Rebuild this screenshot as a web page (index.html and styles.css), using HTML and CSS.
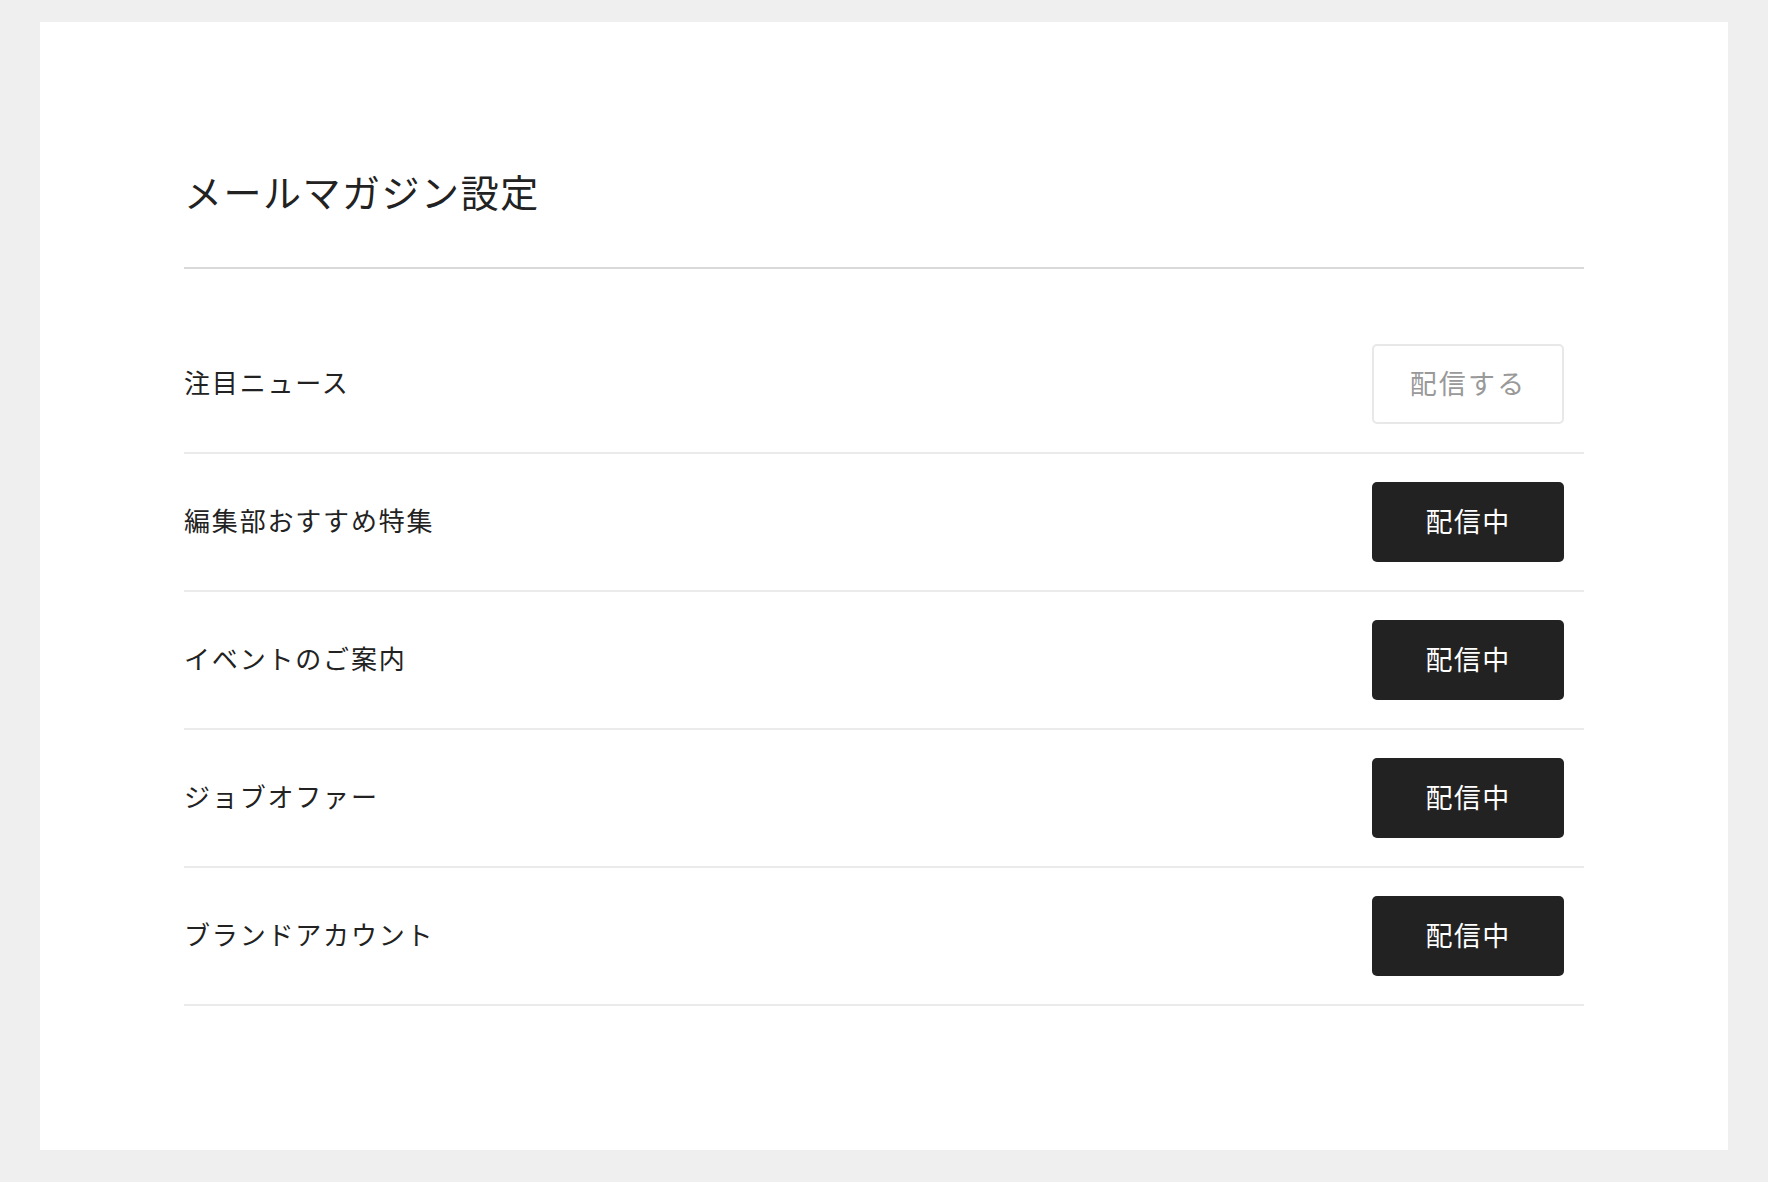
FILE: index.html
```html
<!DOCTYPE html>
<html lang="ja">
<head>
    <meta charset="utf-8">
    <title>メールマガジン設定</title>
    <link rel="stylesheet" href="styles.css">
</head>
<body>
    <div class="page">
        <div class="card">
            <div class="container">
                <h1 class="title">メールマガジン設定</h1>

                <ul class="mail-list">
                    <li class="mail-row">
                        <span class="mail-label">注目ニュース</span>
                        <button class="button button-off">配信する</button>
                    </li>
                    <li class="mail-row">
                        <span class="mail-label">編集部おすすめ特集</span>
                        <button class="button button-on">配信中</button>
                    </li>
                    <li class="mail-row">
                        <span class="mail-label">イベントのご案内</span>
                        <button class="button button-on">配信中</button>
                    </li>
                    <li class="mail-row">
                        <span class="mail-label">ジョブオファー</span>
                        <button class="button button-on">配信中</button>
                    </li>
                    <li class="mail-row">
                        <span class="mail-label">ブランドアカウント</span>
                        <button class="button button-on">配信中</button>
                    </li>
                </ul>
            </div>
        </div>
    </div>
</body>
</html>
```

FILE: styles.css
```css
body {
    margin: 0;
    padding: 0;
    background: #efefef;
    color: #222;
    font-family: "Noto Sans CJK JP", sans-serif;
}

.page {
    padding: 22px 40px 32px;
}

.card {
    background: #fff;
    padding: 142px 0 144px;
}

.container {
    max-width: 1400px;
    margin: 0 auto;
}

.title {
    margin: 0;
    font-size: 38px;
    font-weight: normal;
    line-height: 54px;
    letter-spacing: 0.04em;
    padding-bottom: 49px;
    border-bottom: 2px solid #d9d9d9;
}

.mail-list {
    list-style: none;
    margin: 47px 0 0;
    padding: 0;
}

.mail-row {
    display: flex;
    align-items: center;
    justify-content: space-between;
    padding: 28px 20px 28px 0;
    border-bottom: 2px solid #ebebeb;
}

.mail-label {
    font-size: 26px;
    letter-spacing: 0.07em;
    line-height: 1;
    padding-bottom: 4px;
}

.button {
    width: 192px;
    height: 80px;
    border-radius: 5px;
    font-family: "Noto Sans CJK JP", sans-serif;
    font-size: 27px;
    letter-spacing: 0.05em;
    cursor: pointer;
    padding: 0 0 4px;
}

.button-off {
    background: #fff;
    color: #999;
    border: 2px solid #e8e8e8;
    letter-spacing: 0.08em;
}

.button-on {
    background: #222;
    color: #fff;
    border: none;
}
```
